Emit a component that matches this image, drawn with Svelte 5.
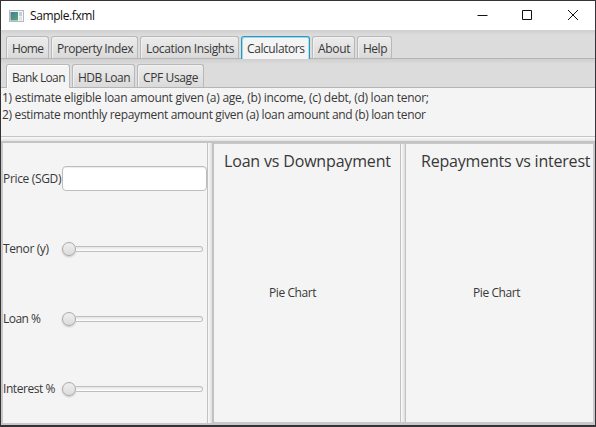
<script>
  const mainTabs = [
    { name: 'Home', box: 43, text: 32 },
    { name: 'Property Index', box: 87, text: 76.5 },
    { name: 'Location Insights', box: 99, text: 88.5 },
    { name: 'Calculators', box: 69, text: 58, focused: true },
    { name: 'About', box: 43, text: 32.5 },
    { name: 'Help', box: 35, text: 24.5 },
  ];
  const subTabs = [
    { name: 'Bank Loan', box: 64, text: 53.5, selected: true },
    { name: 'HDB Loan', box: 63, text: 52.5 },
    { name: 'CPF Usage', box: 67, text: 55.5 },
  ];
  const fields = [
    { name: 'Price (SGD)', text: 58.5, input: true },
    { name: 'Tenor (y)', text: 46 },
    { name: 'Loan %', text: 38 },
    { name: 'Interest %', text: 52.5 },
  ];

  // Tracks the text in or out until it fills the requested width.
  function fit(node, width) {
    const natural = node.getBoundingClientRect().width;
    node.style.letterSpacing = `${(width - natural) / (node.textContent.length - 1)}px`;
  }
</script>

<div class="window">
  <header class="titlebar">
    <svg class="logo" width="15" height="12" viewBox="0 0 15 12">
      <defs>
        <linearGradient id="leaf" x1="0" y1="0" x2="1" y2="1">
          <stop offset="0" stop-color="#447b94" /><stop offset="1" stop-color="#5aa97c" />
        </linearGradient>
      </defs>
      <rect x=".5" y=".5" width="14" height="11" fill="#f4f5f6" stroke="#b6babd" />
      <rect x="1.5" y="2" width="7.5" height="8.5" fill="url(#leaf)" />
      <rect x="10" y="2" width="3" height="4" fill="#b9d3dc" />
      <rect x="10" y="6.5" width="3" height="4" fill="#dbe5e4" />
    </svg>
    <span class="caption" use:fit={65}>Sample.fxml</span>
    <svg class="controls" width="102" height="12" viewBox="0 0 102 12" fill="none" stroke="#111">
      <path d="M.5 6.500H10.500M45.500 1.500H54.500V10.500H45.500ZM91 1L101 11M101 1L91 11" />
    </svg>
  </header>

  <nav class="tabs main">
    {#each mainTabs as t}
      <div class="tab" class:focused={t.focused} style:width="{t.box}px"><span use:fit={t.text}>{t.name}</span></div>
    {/each}
  </nav>
  <nav class="tabs sub">
    {#each subTabs as t}
      <div class="tab" class:selected={t.selected} style:width="{t.box}px"><span use:fit={t.text}>{t.name}</span></div>
    {/each}
  </nav>

  <section class="intro">
    <div><span use:fit={427}>1) estimate eligible loan amount given (a) age, (b) income, (c) debt, (d) loan tenor;</span></div>
    <div><span use:fit={424}>2) estimate monthly repayment amount given (a) loan amount and (b) loan tenor</span></div>
  </section>
  <div class="hsplit"></div>

  <main>
    <section class="form">
      {#each fields as f}
        <div class="row">
          <div class="label"><span use:fit={f.text}>{f.name}</span></div>
          {#if f.input}
            <div class="input"></div>
          {:else}
            <div class="slider"><div class="thumb"></div><div class="track"></div></div>
          {/if}
        </div>
      {/each}
    </section>
    <div class="vsplit"></div>
    <div class="charts">
      <section class="chart first">
        <h2><span use:fit={167}>Loan vs Downpayment</span></h2>
        <p><span use:fit={47.5}>Pie Chart</span></p>
      </section>
      <div class="vsplit"></div>
      <section class="chart second">
        <h2><span use:fit={169.5}>Repayments vs interest</span></h2>
        <p><span use:fit={47.5}>Pie Chart</span></p>
      </section>
    </div>
  </main>
</div>

<style>
  .window {
    box-sizing: border-box;
    width: 596px;
    height: 427px;
    border: 1px solid #353336;
    border-bottom-width: 2px;
    display: flex;
    flex-direction: column;
    overflow: hidden;
    background: #f4f4f4;
    color: #383838;
    font: 12px/17px "Open Sans", "Noto Sans", sans-serif;
    white-space: nowrap;
  }
  span { display: inline-block; }
  .titlebar {
    height: 29px;
    flex: none;
    background: #fff;
    display: flex;
    align-items: center;
    color: #111;
  }
  .logo { margin: 0 6px 0 8px; }
  .caption { margin-bottom: 1px; }
  .controls { margin: 0 16px 1px auto; }
  .tabs {
    box-sizing: border-box;
    flex: none;
    display: flex;
    align-items: flex-end;
    gap: 2px;
    padding-left: 5px;
    background: linear-gradient(#cfcfcf, #dcdcdc 5px);
    border-bottom: 1px solid #b5b5b5;
  }
  .main { height: 29px; }
  .sub { height: 29px; }
  .tab {
    box-sizing: border-box;
    height: 22px;
    border: 1px solid #b8b8b8;
    border-bottom: 0;
    border-radius: 3px 3px 0 0;
    background: linear-gradient(#ececec, #dadada);
    box-shadow: inset 1px 1px #f1f1f1;
    padding: 3px 0 0 5px;
  }
  .sub .tab { height: 23px; padding-top: 4px; }
  .main .focused {
    border: 1px solid #269bc2;
    border-bottom: 0;
    background: #f4f4f4;
    box-shadow: inset 1px 1px #9bd5ea, inset -1px 0 #b3dbe9;
    margin-bottom: -1px;
    height: 23px;
  }
  .sub .selected {
    background: #f4f4f4;
    box-shadow: inset 1px 1px #fff;
    margin-bottom: -1px;
    height: 24px;
  }
  .intro {
    flex: none;
    height: 47px;
    padding-left: 1px;
    margin-top: 1px;
  }
  .intro div { height: 17px; }
  .hsplit {
    flex: none;
    height: 7px;
    box-sizing: border-box;
    border-top: 1px solid #c6c6c6;
    border-bottom: 2px solid #c4c4c4;
    background: linear-gradient(#fafafa, #e4e4e4);
  }
  main {
    flex: 1;
    min-height: 0;
    display: flex;
    border: 1px solid #c8c8c8;
    border-width: 0 1px 2px 2px;
  }
  .form { width: 204px; flex: none; }
  .row {
    height: 70px;
    display: flex;
    align-items: center;
  }
  .label { width: 59px; flex: none; }
  .input {
    box-sizing: border-box;
    width: 145px;
    height: 25px;
    border: 1px solid #bdbdbd;
    border-radius: 4px;
    background: #fff;
    box-shadow: inset 0 1px 1px #ececec;
  }
  .slider {
    width: 141px;
    display: flex;
    align-items: center;
    margin-top: 2px;
  }
  .thumb {
    box-sizing: border-box;
    width: 14px;
    height: 14px;
    flex: none;
    border: 1px solid #aaa;
    border-radius: 50%;
    background: linear-gradient(#efefef, #dcdcdc);
    box-shadow: 0 1px 2px #0003;
  }
  .track {
    box-sizing: border-box;
    flex: 1;
    height: 6px;
    border: 1px solid #bfbfbf;
    border-left: 0;
    border-radius: 0 3px 3px 0;
    background: linear-gradient(#e4e4e4, #fff);
  }
  .vsplit {
    box-sizing: border-box;
    width: 6px;
    flex: none;
    border: 1px solid #c2c2c2;
    background: linear-gradient(90deg, #fafafa, #dedede);
    border-width: 0 1px;
  }
  .charts {
    flex: 1;
    display: flex;
    min-width: 0;
    border: 1px solid #c8c8c8;
    border-width: 1px 1px 1px 0;
  }
  main > .vsplit { border-right-width: 2px; width: 7px; }
  .first { width: 186px; }
  .second { flex: 1; min-width: 0; }
  .chart { display: flex; flex-direction: column; }
  .first { flex: none; }
  h2 {
    margin: 5px 0 0;
    height: 24px;
    padding-left: 10px;
    font-size: 16px;
    line-height: 24px;
    font-weight: 400;
  }
  .second h2 { padding-left: 15px; }
  p { margin: 111px 0 0 55px; }
  .second p { margin-left: 67px; }
</style>
